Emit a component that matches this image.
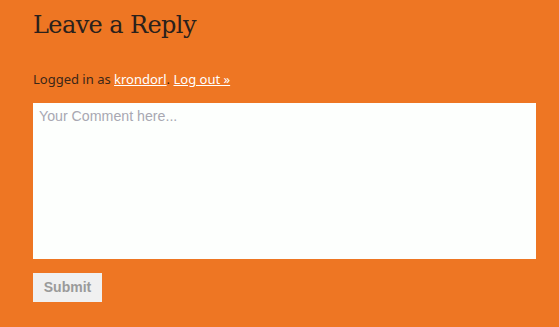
export default function App() {
  return (
    <div className="w-[559px] h-[327px] bg-[#ee7623] overflow-hidden">
      <div className="pl-[33px] pr-[23px] pt-[9px]">
        <h3 className="text-[24px] leading-[32px] text-[#2a211c] font-['DejaVu_Serif',serif] tracking-[-0.6px]">
          Leave a Reply
        </h3>
        <p className="mt-[29px] text-[13px] leading-[18px] text-[#3a2618] font-['Noto_Sans',sans-serif]">
          Logged in as{" "}
          <a href="#" className="text-white underline">krondorl</a>.{" "}
          <a href="#" className="text-white underline">Log out »</a>
        </p>
        <textarea
          placeholder="Your Comment here..."
          className="mt-[15px] block w-[503px] h-[156px] bg-[#fdfffd] px-[6px] pt-[5px] text-[14.2px] leading-[17px] font-['Liberation_Sans',sans-serif] placeholder:text-[#a8a8b2] outline-none resize-none"
        />
        <button className="mt-[14px] w-[69px] h-[29px] bg-[#f0f0f0] text-[#9a9a9a] font-bold text-[14px] font-['Liberation_Sans',sans-serif]">
          Submit
        </button>
      </div>
    </div>
  );
}
